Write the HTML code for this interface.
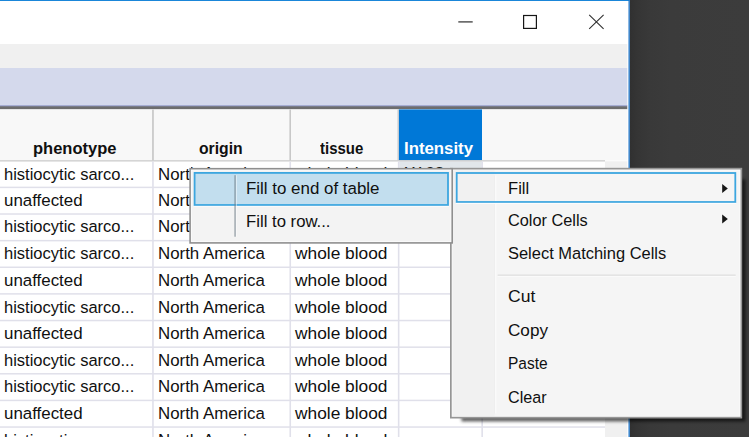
<!DOCTYPE html><html><head><meta charset="utf-8"><title>table</title><style>
html,body{margin:0;padding:0;}
body{width:749px;height:437px;overflow:hidden;position:relative;background:#3b3b3b;font-family:"Liberation Sans",sans-serif;font-size:16.8px;color:#101010;}
.abs{position:absolute;}
svg.layer{position:absolute;left:0;top:0;}
.t{position:absolute;white-space:nowrap;transform-origin:0 50%;line-height:20px;height:20px;}
.b{font-weight:bold;}
</style></head><body>
<svg class="layer" width="749" height="437" viewBox="0 0 749 437">
<defs><linearGradient id="dk" x1="0" x2="1" y1="0" y2="0"><stop offset="0" stop-color="#303030"/><stop offset="0.07" stop-color="#353535"/><stop offset="0.18" stop-color="#393939"/><stop offset="0.35" stop-color="#3b3b3b"/><stop offset="1" stop-color="#3c3c3c"/></linearGradient>
<linearGradient id="ln" x1="0" x2="0" y1="0" y2="1"><stop offset="0" stop-color="#d4d9ec"/><stop offset="0.2" stop-color="#959dc8"/><stop offset="0.42" stop-color="#6d6d6f"/><stop offset="0.85" stop-color="#6c6c6c"/><stop offset="1" stop-color="#c0c0c0"/></linearGradient></defs>
<rect x="629.00" y="0.00" width="120.00" height="437.00" fill="url(#dk)"/>
<rect x="0.00" y="0.00" width="629.70" height="437.00" fill="#ffffff"/>
<rect x="0.00" y="44.00" width="627.30" height="24.00" fill="#f0f0f0"/>
<rect x="0.00" y="68.00" width="627.30" height="38.00" fill="#d4d9ec"/>
<rect x="0.00" y="104.80" width="627.30" height="4.80" fill="url(#ln)"/>
<rect x="0.00" y="109.50" width="627.30" height="51.00" fill="#f8f8f8"/>
<rect x="0.00" y="161.30" width="605.00" height="276.00" fill="#ffffff"/>
<rect x="605.00" y="161.30" width="22.30" height="276.00" fill="#f0f0f0"/>
<rect x="398.70" y="109.40" width="83.30" height="50.80" fill="#0078d7"/>
<rect x="399.30" y="161.30" width="82.50" height="8.00" fill="#e1e6ea"/>
<rect x="0.00" y="160.20" width="605.00" height="1.30" fill="#cbcbcb"/>
<rect x="152.10" y="109.50" width="1.70" height="51.00" fill="#c8c8c8"/>
<rect x="289.40" y="109.50" width="1.60" height="51.00" fill="#c8c8c8"/>
<rect x="397.50" y="109.50" width="1.20" height="51.00" fill="#c8c8c8"/>
<rect x="0.00" y="186.63" width="605.00" height="1.50" fill="#e0e0ea"/>
<rect x="0.00" y="213.26" width="605.00" height="1.50" fill="#e0e0ea"/>
<rect x="0.00" y="239.89" width="605.00" height="1.50" fill="#e0e0ea"/>
<rect x="0.00" y="266.52" width="605.00" height="1.50" fill="#e0e0ea"/>
<rect x="0.00" y="293.15" width="605.00" height="1.50" fill="#e0e0ea"/>
<rect x="0.00" y="319.78" width="605.00" height="1.50" fill="#e0e0ea"/>
<rect x="0.00" y="346.41" width="605.00" height="1.50" fill="#e0e0ea"/>
<rect x="0.00" y="373.04" width="605.00" height="1.50" fill="#e0e0ea"/>
<rect x="0.00" y="399.67" width="605.00" height="1.50" fill="#e0e0ea"/>
<rect x="0.00" y="426.30" width="605.00" height="1.50" fill="#e0e0ea"/>
<rect x="152.15" y="161.40" width="1.60" height="276.00" fill="#e0e0ea"/>
<rect x="289.45" y="161.40" width="1.60" height="276.00" fill="#e0e0ea"/>
<rect x="397.85" y="161.40" width="1.60" height="276.00" fill="#e0e0ea"/>
<rect x="481.35" y="161.40" width="1.60" height="276.00" fill="#e0e0ea"/>
<rect x="0.00" y="0.00" width="629.60" height="1.00" fill="#1a86d9"/>
<rect x="628.50" y="0.00" width="1.25" height="437.00" fill="#1873c9"/>
<g fill="none"><path d="M458.3 21.9H472.7" stroke="#3c3c3c" stroke-width="1.3"/><rect x="523.6" y="15.5" width="12.8" height="12.9" stroke="#161616" stroke-width="1.2"/><path d="M589.2 14.9L603.6 28.9M603.6 14.9L589.2 28.9" stroke="#303030" stroke-width="1.1"/></g>
</svg>
<span class="t b" id="h1" style="left:33.3px;top:139.0px;transform:scaleX(0.9830);">phenotype</span>
<span class="t b" id="h2" style="left:199.0px;top:139.0px;transform:scaleX(0.9376);">origin</span>
<span class="t b" id="h3" style="left:319.7px;top:139.0px;transform:scaleX(0.8925);">tissue</span>
<span class="t b" id="h4" style="left:404.0px;top:139.0px;transform:scaleX(0.9998);color:#fff;">Intensity</span>
<span class="t " id="p0" style="left:4.2px;top:165.0px;transform:scaleX(0.9839);">histiocytic sarco...</span>
<span class="t " id="o0" style="left:158.4px;top:165.0px;transform:scaleX(1.0044);">North America</span>
<span class="t " id="w0" style="left:294.8px;top:165.0px;transform:scaleX(1.0326);">whole blood</span>
<span class="t " id="p1" style="left:4.2px;top:191.0px;transform:scaleX(1.0067);">unaffected</span>
<span class="t " id="o1" style="left:158.4px;top:191.0px;transform:scaleX(1.0044);">North America</span>
<span class="t " id="w1" style="left:294.8px;top:191.0px;transform:scaleX(1.0326);">whole blood</span>
<span class="t " id="p2" style="left:4.2px;top:217.0px;transform:scaleX(0.9839);">histiocytic sarco...</span>
<span class="t " id="o2" style="left:158.4px;top:217.0px;transform:scaleX(1.0044);">North America</span>
<span class="t " id="w2" style="left:294.8px;top:217.0px;transform:scaleX(1.0326);">whole blood</span>
<span class="t " id="p3" style="left:4.2px;top:244.0px;transform:scaleX(0.9839);">histiocytic sarco...</span>
<span class="t " id="o3" style="left:158.4px;top:244.0px;transform:scaleX(1.0044);">North America</span>
<span class="t " id="w3" style="left:294.8px;top:244.0px;transform:scaleX(1.0326);">whole blood</span>
<span class="t " id="p4" style="left:4.2px;top:271.0px;transform:scaleX(1.0067);">unaffected</span>
<span class="t " id="o4" style="left:158.4px;top:271.0px;transform:scaleX(1.0044);">North America</span>
<span class="t " id="w4" style="left:294.8px;top:271.0px;transform:scaleX(1.0326);">whole blood</span>
<span class="t " id="p5" style="left:4.2px;top:298.0px;transform:scaleX(0.9839);">histiocytic sarco...</span>
<span class="t " id="o5" style="left:158.4px;top:298.0px;transform:scaleX(1.0044);">North America</span>
<span class="t " id="w5" style="left:294.8px;top:298.0px;transform:scaleX(1.0326);">whole blood</span>
<span class="t " id="p6" style="left:4.2px;top:324.0px;transform:scaleX(1.0067);">unaffected</span>
<span class="t " id="o6" style="left:158.4px;top:324.0px;transform:scaleX(1.0044);">North America</span>
<span class="t " id="w6" style="left:294.8px;top:324.0px;transform:scaleX(1.0326);">whole blood</span>
<span class="t " id="p7" style="left:4.2px;top:351.0px;transform:scaleX(0.9839);">histiocytic sarco...</span>
<span class="t " id="o7" style="left:158.4px;top:351.0px;transform:scaleX(1.0044);">North America</span>
<span class="t " id="w7" style="left:294.8px;top:351.0px;transform:scaleX(1.0326);">whole blood</span>
<span class="t " id="p8" style="left:4.2px;top:377.0px;transform:scaleX(0.9839);">histiocytic sarco...</span>
<span class="t " id="o8" style="left:158.4px;top:377.0px;transform:scaleX(1.0044);">North America</span>
<span class="t " id="w8" style="left:294.8px;top:377.0px;transform:scaleX(1.0326);">whole blood</span>
<span class="t " id="p9" style="left:4.2px;top:404.0px;transform:scaleX(1.0067);">unaffected</span>
<span class="t " id="o9" style="left:158.4px;top:404.0px;transform:scaleX(1.0044);">North America</span>
<span class="t " id="w9" style="left:294.8px;top:404.0px;transform:scaleX(1.0326);">whole blood</span>
<span class="t " id="p10" style="left:4.2px;top:431.0px;transform:scaleX(0.9839);">histiocytic sarco...</span>
<span class="t " id="o10" style="left:158.4px;top:431.0px;transform:scaleX(1.0044);">North America</span>
<span class="t " id="w10" style="left:294.8px;top:431.0px;transform:scaleX(1.0326);">whole blood</span>
<div class="abs" style="left:191px;top:161px;width:414px;height:8px;overflow:hidden;">
<span class="t " id="o0b" style="left:-32.6px;top:3.0px;transform:scaleX(1.0044);">North America</span>
<span class="t " id="w0b" style="left:103.8px;top:3.0px;transform:scaleX(1.0326);">whole blood</span>
<span class="t " id="m0" style="left:213.0px;top:3.0px;transform:scaleX(0.8250);">MACS</span>
</div>
<div class="abs" style="left:457px;top:175px;width:285px;height:243px;box-shadow:3.5px 3.5px 3px rgba(0,0,0,0.62);"></div>
<svg class="layer" width="749" height="437" viewBox="0 0 749 437">
<rect x="450.00" y="167.80" width="292.20" height="250.70" fill="#969696"/>
<rect x="451.70" y="169.50" width="288.80" height="247.30" fill="#fbfbfb"/>
<rect x="452.60" y="170.40" width="287.00" height="245.50" fill="#f5f5f5"/>
<rect x="452.60" y="170.40" width="42.00" height="245.50" fill="#f1f1f1"/>
<rect x="494.40" y="175.50" width="0.80" height="238.00" fill="#ececec"/>
<rect x="495.20" y="175.50" width="1.00" height="238.00" fill="#fcfcfc"/>
<rect x="456.7" y="173.0" width="278.6" height="29.0" fill="none" stroke="#3ca6df" stroke-width="1.8"/>
<rect x="455.80" y="202.90" width="280.40" height="1.00" fill="#fdfdfd"/>
<rect x="497.70" y="274.60" width="238.00" height="1.20" fill="#d9d9d9"/>
<rect x="497.70" y="275.80" width="238.00" height="1.00" fill="#fcfcfc"/>
<path d="M722.2 184.10L727.8 188.60L722.2 193.10Z" fill="#151515"/>
<path d="M722.2 214.50L727.8 219.00L722.2 223.50Z" fill="#151515"/>
<rect x="189.30" y="167.90" width="263.70" height="75.80" fill="#8f8f8f"/>
<rect x="190.90" y="169.50" width="260.50" height="72.60" fill="#fbfbfb"/>
<rect x="191.90" y="170.50" width="258.50" height="70.60" fill="#f3f3f3"/>
<rect x="193.70" y="172.00" width="255.20" height="33.90" fill="#3ca6df"/>
<rect x="195.50" y="173.80" width="251.60" height="30.30" fill="#c2deee"/>
<rect x="193.70" y="205.90" width="255.20" height="1.00" fill="#fbfbfb"/>
<rect x="234.30" y="175.20" width="1.60" height="61.50" fill="rgba(110,125,135,0.6)"/>
<rect x="235.90" y="175.20" width="1.00" height="61.50" fill="rgba(255,255,255,0.5)"/>
</svg>
<span class="t " id="s1" style="left:245.7px;top:179.0px;transform:scaleX(1.0078);">Fill to end of table</span>
<span class="t " id="s2" style="left:245.7px;top:212.0px;transform:scaleX(0.9958);">Fill to row...</span>
<span class="t " id="m1" style="left:507.8px;top:179.0px;transform:scaleX(0.9889);">Fill</span>
<span class="t " id="m2" style="left:508.0px;top:211.0px;transform:scaleX(0.9722);">Color Cells</span>
<span class="t " id="m3" style="left:508.0px;top:244.0px;transform:scaleX(0.9804);">Select Matching Cells</span>
<span class="t " id="m4" style="left:507.8px;top:287.0px;transform:scaleX(1.0450);">Cut</span>
<span class="t " id="m5" style="left:507.8px;top:321.0px;transform:scaleX(1.0207);">Copy</span>
<span class="t " id="m6" style="left:508.3px;top:354.0px;transform:scaleX(0.9226);">Paste</span>
<span class="t " id="m7" style="left:507.8px;top:388.0px;transform:scaleX(0.9624);">Clear</span>
</body></html>
